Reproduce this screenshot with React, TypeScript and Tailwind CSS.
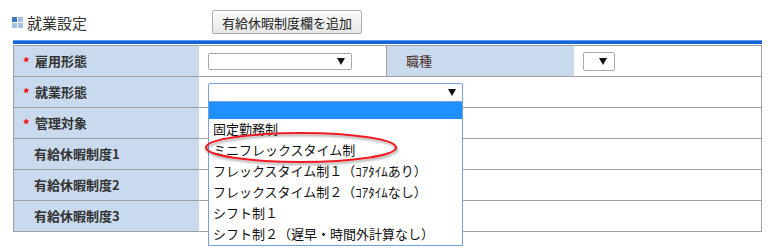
const FONT = "font-['Noto_Sans_CJK_JP','Noto_Sans',sans-serif]";

const Arrow = () => (
  <svg width="8" height="7" viewBox="0 0 8 7" className="shrink-0">
    <path d="M0 0H8L4 7Z" fill="#111" />
  </svg>
);

const Label = ({ text, required }: { text: string; required?: boolean }) => (
  <div className="w-[185px] shrink-0 bg-[#c9daee] flex items-center">
    {required ? (
      <>
        <span className="w-[12px] ml-[9px] text-[#ff0000] text-[13px] font-bold leading-none">*</span>
        <span className="text-[13px] font-bold text-[#333]">{text}</span>
      </>
    ) : (
      <span className="ml-[20px] text-[13px] font-bold text-[#333]">{text}</span>
    )}
  </div>
);

const options = [
  "固定勤務制",
  "ミニフレックスタイム制",
  "フレックスタイム制１（ｺｱﾀｲﾑあり）",
  "フレックスタイム制２（ｺｱﾀｲﾑなし）",
  "シフト制１",
  "シフト制２（遅早・時間外計算なし）",
];

export default function App() {
  return (
    <div className={`relative w-[771px] h-[250px] bg-white overflow-hidden ${FONT}`}>
      {/* title + button */}
      <div className="flex items-center pt-[10px] h-[34px]">
        <div className="w-[212px] flex items-center pl-[12px]">
          <div className="grid grid-cols-2 gap-[1px] w-[11px] h-[11px]">
            <span className="bg-[#3b76c0]" />
            <span className="bg-[#a3c0e2]" />
            <span className="bg-[#a3c0e2]" />
            <span className="bg-[#a3c0e2]" />
          </div>
          <span className="ml-[4px] text-[15px] text-[#333] leading-none">就業設定</span>
        </div>
        <button className="h-[24px] w-[150px] border border-[#adadad] rounded-[2px] bg-gradient-to-b from-[#fcfcfc] to-[#e6e6e6] text-[13px] text-[#222] leading-none">
          有給休暇制度欄を追加
        </button>
      </div>

      {/* blue bar */}
      <div className="mt-[6px] ml-[13px] w-[749px] h-[4px] border-t border-[#5c9cf0] bg-[#1463d8]" />

      {/* table */}
      <div className="mt-[1px] ml-[13px] w-[749px] border border-[#a0a0a0]">
        <div className="flex h-[31px] border-b border-[#a0a0a0]">
          <Label text="雇用形態" required />
          <div className="w-[187px] shrink-0 flex items-center pl-[9px]">
            <div className="w-[144px] h-[17px] border border-[#a9a9a9] rounded-[2px] flex items-center justify-end pr-[6px]">
              <Arrow />
            </div>
          </div>
          <div className="w-[188px] shrink-0 border-l border-[#a0a0a0] bg-[#c9daee] flex items-center pl-[19px]">
            <span className="text-[13px] text-[#4d3030]">職種</span>
          </div>
          <div className="flex-1 flex items-center pl-[9px]">
            <div className="w-[32px] h-[19px] border border-[#a9a9a9] rounded-[2px] flex items-center justify-end pr-[7px]">
              <Arrow />
            </div>
          </div>
        </div>

        <div className="flex h-[31px] border-b border-[#a0a0a0]">
          <Label text="就業形態" required />
          <div className="flex-1 flex items-center pl-[9px]">
            <div className="relative w-[255px] h-[19px] border border-[#7b9ed9] rounded-t-[2px] flex items-center justify-end pr-[6px]">
              <Arrow />
              <div className="absolute left-[-1px] top-[17px] w-[255px] border border-[#7b9ed9] bg-white z-10">
                <div className="h-[17px] bg-[#1e90ff]" />
                {options.map((o) => (
                  <div key={o} className="h-[21px] flex items-center pl-[4px] text-[13px] text-[#111] whitespace-nowrap">
                    {o}
                  </div>
                ))}
              </div>
            </div>
          </div>
        </div>

        <div className="flex h-[31px] border-b border-[#a0a0a0]">
          <Label text="管理対象" required />
          <div className="flex-1" />
        </div>
        <div className="flex h-[31px] border-b border-[#a0a0a0]">
          <Label text="有給休暇制度1" />
          <div className="flex-1" />
        </div>
        <div className="flex h-[31px] border-b border-[#a0a0a0]">
          <Label text="有給休暇制度2" />
          <div className="flex-1" />
        </div>
        <div className="flex h-[30px]">
          <Label text="有給休暇制度3" />
          <div className="flex-1" />
        </div>
      </div>

      {/* red highlight ellipse */}
      <svg
        className="absolute left-[203px] top-[130px] z-20 pointer-events-none"
        width="200"
        height="38"
        viewBox="0 0 200 38"
      >
        <defs>
          <filter id="sh" x="-10%" y="-30%" width="120%" height="160%">
            <feDropShadow dx="1" dy="2" stdDeviation="1.2" floodColor="#000" floodOpacity="0.35" />
          </filter>
        </defs>
        <ellipse cx="98" cy="17.5" rx="95" ry="14.5" fill="none" stroke="#ee1c24" strokeWidth="2.2" filter="url(#sh)" />
      </svg>
    </div>
  );
}
